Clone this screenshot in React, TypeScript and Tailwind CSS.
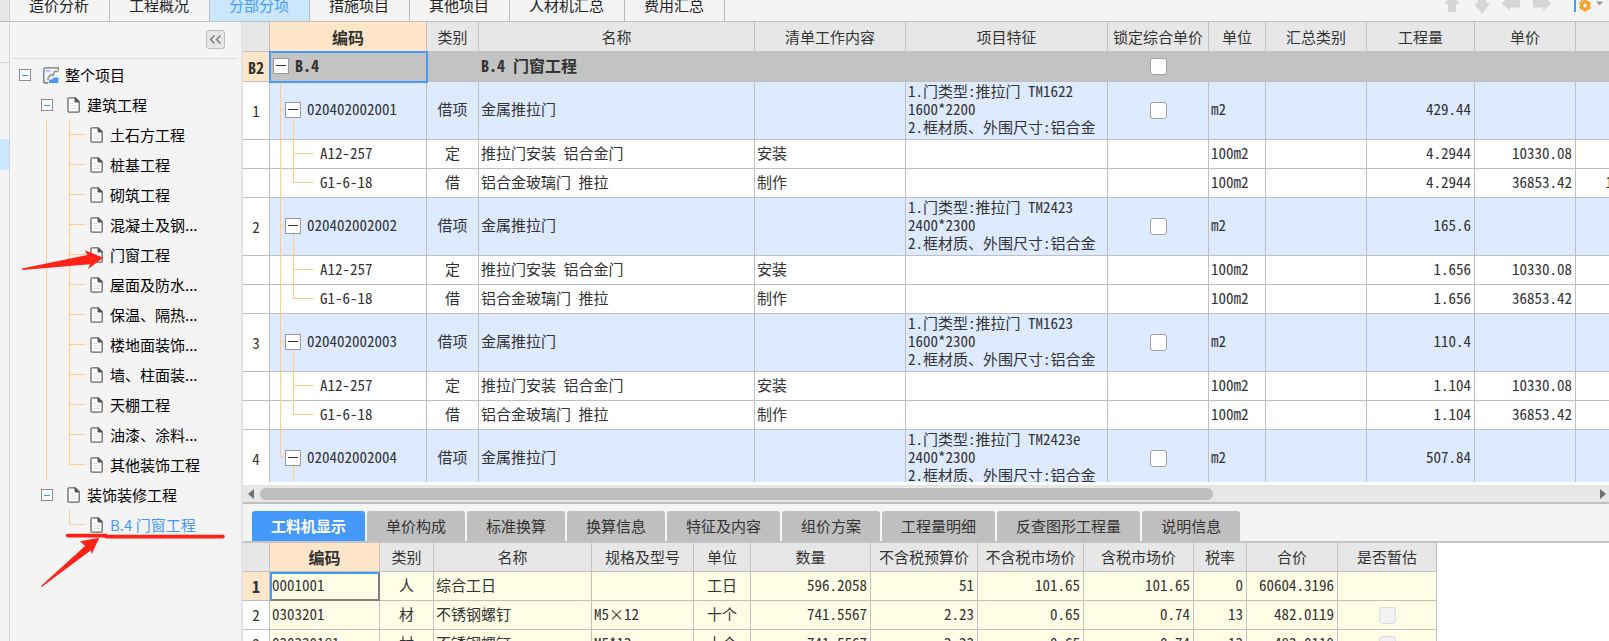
import clsx from 'clsx';

const topTabs = ['造价分析', '工程概况', '分部分项', '措施项目', '其他项目', '人材机汇总', '费用汇总'];

const buildingItems = [
  '土石方工程',
  '桩基工程',
  '砌筑工程',
  '混凝土及钢...',
  '门窗工程',
  '屋面及防水...',
  '保温、隔热...',
  '楼地面装饰...',
  '墙、柱面装...',
  '天棚工程',
  '油漆、涂料...',
  '其他装饰工程',
];

const listColumns = [
  { title: '', width: 'w-[27px]' },
  { title: '编码', width: 'w-[157px]' },
  { title: '类别', width: 'w-[52px]' },
  { title: '名称', width: 'w-[276px]' },
  { title: '清单工作内容', width: 'w-[151px]' },
  { title: '项目特征', width: 'w-[202px]' },
  { title: '锁定综合单价', width: 'w-[101px]' },
  { title: '单位', width: 'w-[57px]' },
  { title: '汇总类别', width: 'w-[101px]' },
  { title: '工程量', width: 'w-[108px]' },
  { title: '单价', width: 'w-[101px]' },
  { title: '', width: 'w-[101px]' },
];

const listItems = [
  { code: '020402002001', model: 'TM1622', size: '1600*2200', total: '429.44', quantity: '4.2944', amount: '158263.33' },
  { code: '020402002002', model: 'TM2423', size: '2400*2300', total: '165.6', quantity: '1.656', amount: '' },
  { code: '020402002003', model: 'TM1623', size: '1600*2300', total: '110.4', quantity: '1.104', amount: '' },
  { code: '020402002004', model: 'TM2423e', size: '2400*2300', total: '507.84', quantity: '', amount: '' },
];

const quotas = [
  { code: 'A12-257', type: '定', name: '推拉门安装 铝合金门', work: '安装', price: '10330.08' },
  { code: 'G1-6-18', type: '借', name: '铝合金玻璃门 推拉', work: '制作', price: '36853.42' },
];

const detailTabs = ['工料机显示', '单价构成', '标准换算', '换算信息', '特征及内容', '组价方案', '工程量明细', '反查图形工程量', '说明信息'];

const detailColumns = [
  { title: '', width: 'w-[27px]' },
  { title: '编码', width: 'w-[110px]' },
  { title: '类别', width: 'w-[54px]' },
  { title: '名称', width: 'w-[158px]' },
  { title: '规格及型号', width: 'w-[102px]' },
  { title: '单位', width: 'w-[57px]' },
  { title: '数量', width: 'w-[120px]' },
  { title: '不含税预算价', width: 'w-[107px]' },
  { title: '不含税市场价', width: 'w-[106px]' },
  { title: '含税市场价', width: 'w-[110px]' },
  { title: '税率', width: 'w-[53px]' },
  { title: '合价', width: 'w-[91px]' },
  { title: '是否暂估', width: 'w-[99px]' },
];

const detailRows = [
  { code: '0001001', type: '人', name: '综合工日', spec: '', unit: '工日', numbers: ['596.2058', '51', '101.65', '101.65', '0', '60604.3196'], estimate: false },
  { code: '0303201', type: '材', name: '不锈钢螺钉', spec: 'M5×12', unit: '十个', numbers: ['741.5567', '2.23', '0.65', '0.74', '13', '482.0119'], estimate: true },
  { code: '0303201@1', type: '材', name: '不锈钢螺钉', spec: 'M5*12', unit: '十个', numbers: ['741.5567', '2.23', '0.65', '0.74', '13', '482.0119'], estimate: true },
];

const cell = 'border-r border-b border-[#c0c0c0] p-0 whitespace-nowrap';
const textCell = 'border-r border-b border-[#c0c0c0] p-0 pb-[3px] whitespace-nowrap';

const FileIcon = () => (
  <svg className="h-4 w-[13px] shrink-0" viewBox="0 0 13 16" fill="none">
    <path d="M1 2Q1 .8 2.2 .8H8.3L12.2 4.8V14Q12.2 15.2 11 15.2H2.2Q1 15.2 1 14Z" fill="#fff" stroke="#666" strokeWidth="1.3" />
    <path d="M8 .8V5H12.2Z" fill="#555" stroke="#555" />
    <path d="M3.5 6.5H7M3.5 9H10M3.5 11.5H10" stroke="#ddd" />
  </svg>
);

const ProjectIcon = () => (
  <svg className="h-[17px] w-4 shrink-0" viewBox="0 0 16 17" fill="none">
    <path d="M5 16H2Q.8 16 .8 15V2Q.8 .8 2 .8H15.4V3.5" stroke="#777" strokeWidth="1.3" />
    <path d="M2.5 4H7.5" stroke="#a9cffb" strokeWidth="2.4" />
    <path d="M15.4 4.5H11.5L10.5 8H7.5L5 11V13" stroke="#888" strokeWidth="1.3" />
    <path d="M6 16V12.5H9L11 10.5H15.4V16Z" fill="#4599fd" />
  </svg>
);

const Expander = () => (
  <button aria-label="折叠" className="flex size-3 shrink-0 items-center justify-center border border-[#8c8c8c] bg-white">
    <span className="h-px w-1.5 bg-[#1ea7e8]" />
  </button>
);

const Branch = ({ last }: { last?: boolean }) => (
  <svg className="h-[30px] w-4 shrink-0" viewBox="0 0 16 30">
    <path d={last ? 'M.5 0V14.5H16' : 'M.5 0V30M.5 14.5H16'} fill="none" stroke="#ffcb85" />
  </svg>
);

const TreeLeaf = ({ label, last, active }: { label: string; last?: boolean; active?: boolean }) => (
  <li className="flex h-[30px] items-center">
    <Branch last={last} />
    <a href="#" className={clsx('ml-[5px] flex items-center gap-[7px]', active && 'text-[#4599fd]')}>
      <FileIcon />
      {label}
    </a>
  </li>
);

const Sidebar = () => (
  <aside className="relative w-[231px] shrink-0 bg-[#f4f4f4] text-[15px] leading-5 text-black">
    <div className="mx-[3px] flex h-[37px] items-end justify-end border-b border-[#dcdcdc] pr-[13px] pb-[9px]">
      <button aria-label="收起" className="flex size-[19px] items-center justify-center rounded-[3px] border border-[#bdbdbd] bg-[#e6e6e6]">
        <svg className="h-[9px] w-[13px]" viewBox="0 0 13 9" fill="none" stroke="#777" strokeWidth="1.4">
          <path d="M5.5 .5L1.5 4.5L5.5 8.5M11.5 .5L7.5 4.5L11.5 8.5" />
        </svg>
      </button>
    </div>
    <div className="pt-px">
      <div className="flex h-[30px] items-center pl-[9px]">
        <Expander />
        <span className="ml-3 flex items-center gap-[6px]">
          <ProjectIcon />
          整个项目
        </span>
      </div>
      <ul>
        <li>
          <div className="flex h-[30px] items-center pl-[31px]">
            <Expander />
            <span className="ml-[14px] flex items-center gap-[7px]">
              <FileIcon />
              建筑工程
            </span>
          </div>
          <ul className="ml-9 border-l border-[#ffcb85] pl-[22px]">
            {buildingItems.map((item, index) => (
              <TreeLeaf key={item} label={item} last={index === buildingItems.length - 1} />
            ))}
          </ul>
        </li>
        <li>
          <div className="flex h-[30px] items-center pl-[31px]">
            <Expander />
            <span className="ml-[14px] flex items-center gap-[7px]">
              <FileIcon />
              装饰装修工程
            </span>
          </div>
          <ul className="pl-[59px]">
            <TreeLeaf label="B.4 门窗工程" last active />
          </ul>
        </li>
      </ul>
    </div>

    {/* Red markers over the tree */}
    <svg className="pointer-events-none absolute top-0 left-0 h-[619px] w-[231px]" viewBox="10 22 231 619" fill="#ff2216">
      <path d="M22 268.5L87.3 255L85 250.3L103.3 257.7L88 269L90 264.3L22.3 270Z" />
      <path d="M41 586L85 546L80 541.3L99.3 537.7L91.7 554.3L91 550.3L41.6 587Z" />
      <path d="M67.5 535.6H106M106 536.6H223" fill="none" stroke="#ff2216" strokeWidth="3.6" strokeLinecap="round" />
    </svg>
  </aside>
);

const RowToggle = () => (
  <button aria-label="折叠" className="flex size-4 shrink-0 items-center justify-center border border-[#999] bg-white">
    <span className="h-px w-2.5 bg-[#333]" />
  </button>
);

const GridHead = ({ columns, height }: { columns: { title: string; width: string }[]; height: string }) => (
  <>
    <colgroup>
      {columns.map((column, index) => (
        <col key={index} className={column.width} />
      ))}
    </colgroup>
    <thead>
      <tr className={clsx('bg-[#e7e7e7]', height)}>
        {columns.map((column, index) => (
          <th key={index} className={clsx(cell, index === 1 ? 'bg-[#ffe6c8] text-base leading-[18px] font-bold' : 'font-normal')}>
            {column.title}
          </th>
        ))}
      </tr>
    </thead>
  </>
);

const Check = ({ label, disabled }: { label: string; disabled?: boolean }) => (
  <input
    type="checkbox"
    aria-label={label}
    disabled={disabled}
    className={clsx(
      'mx-auto block size-[17px] appearance-none rounded-[3px] border',
      disabled ? 'border-[#dcdcdc] bg-[#f2f2f2]' : 'border-[#a0a0a0] bg-white'
    )}
  />
);

const ListTable = () => (
  <div className="min-h-0 flex-1 overflow-hidden bg-white">
    <table className="w-[1434px] table-fixed border-separate border-spacing-0">
      <GridHead columns={listColumns} height="h-[30px]" />
      <tbody>
        <tr className="h-[30px] bg-[#c3c3c3] text-base leading-[18px] font-bold">
          <td className={clsx(cell, 'bg-[#ffe6c8] text-center')}>B2</td>
          <td className={clsx(cell, 'relative outline-2 -outline-offset-1 outline-[#4599fd]')}>
            <div className="flex items-center gap-[6px] pb-[2px] pl-[3px]">
              <RowToggle />
              <span className="pb-[2px]">B.4</span>
            </div>
          </td>
          <td className={cell} />
          <td className={clsx(textCell, 'pl-[2px]')}>B.4 门窗工程</td>
          <td className={cell} />
          <td className={cell} />
          <td className={cell}>
            <Check label="锁定综合单价 B.4" />
          </td>
          <td className={cell} />
          <td className={cell} />
          <td className={cell} />
          <td className={cell} />
          <td className={cell} />
        </tr>
        {listItems.map((item, index) => {
          const last = index === listItems.length - 1;
          return [
            <tr key={item.code} className="h-[58px] bg-[#ddeaff]">
              <td className={clsx(cell, 'bg-white text-center')}>{index + 1}</td>
              <td className={cell}>
                <div className="flex h-[57px] items-center pb-[2px]">
                  <svg className="h-[57px] w-[15px] shrink-0 overflow-visible" viewBox="0 0 15 57" fill="none" stroke="#ffcb85">
                    <path d={last ? 'M10.5 0V28.5H15' : 'M10.5 0V59M10.5 28.5H15'} />
                    <path d="M23.5 36V59" />
                  </svg>
                  <RowToggle />
                  <span className="ml-[6px] pb-[2px]">{item.code}</span>
                </div>
              </td>
              <td className={clsx(textCell, 'text-center')}>借项</td>
              <td className={clsx(textCell, 'pl-[2px]')}>金属推拉门</td>
              <td className={cell} />
              <td className={clsx(textCell, 'pl-[2px]')}>
                1.门类型:推拉门 {item.model}
                <br />
                {item.size}
                <br />
                2.框材质、外围尺寸:铝合金
              </td>
              <td className={cell}>
                <Check label={`锁定综合单价 ${item.code}`} />
              </td>
              <td className={clsx(textCell, 'pl-[2px]')}>m2</td>
              <td className={cell} />
              <td className={clsx(textCell, 'pr-[3px] text-right')}>{item.total}</td>
              <td className={cell} />
              <td className={cell} />
            </tr>,
            ...(last ? [] : quotas).map((quota, quotaIndex) => (
              <tr key={item.code + quota.code} className="h-[29px]">
                <td className={cell} />
                <td className={cell}>
                  <div className="flex h-7 items-center">
                    <svg className="h-7 w-[45px] shrink-0 overflow-visible" viewBox="0 0 45 28" fill="none" stroke="#ffcb85">
                      <path d="M10.5 0V29" />
                      <path d={quotaIndex === 1 ? 'M23.5 0V13.5H44' : 'M23.5 0V29M23.5 13.5H44'} />
                    </svg>
                    <span className="ml-[5px] pb-[3px]">{quota.code}</span>
                  </div>
                </td>
                <td className={clsx(textCell, 'text-center')}>{quota.type}</td>
                <td className={clsx(textCell, 'pl-[2px]')}>{quota.name}</td>
                <td className={clsx(textCell, 'pl-[2px]')}>{quota.work}</td>
                <td className={cell} />
                <td className={cell} />
                <td className={clsx(textCell, 'pl-[2px]')}>100m2</td>
                <td className={cell} />
                <td className={clsx(textCell, 'pr-[3px] text-right')}>{item.quantity}</td>
                <td className={clsx(textCell, 'pr-[3px] text-right')}>{quota.price}</td>
                <td className={clsx(textCell, 'pr-[3px] text-right')}>{quotaIndex === 1 && item.amount}</td>
              </tr>
            )),
          ];
        })}
      </tbody>
    </table>
  </div>
);

const ScrollBar = () => (
  <div className="border-t-[3px] border-b-2 border-t-white border-b-[#c0c0c0] bg-[#e7e7e7]">
    <div className="flex h-[17px] items-center gap-[6px] pl-[5px]">
      <svg className="h-[10px] w-[6px]" viewBox="0 0 6 10">
        <path d="M6 0V10L0 5Z" fill="#6e6e76" />
      </svg>
      <div className="flex-1">
        <div className="h-3 w-5/7 rounded-full bg-[#bfbfbf]" />
      </div>
      <svg className="mr-[3px] h-[10px] w-[6px]" viewBox="0 0 6 10">
        <path d="M0 0V10L6 5Z" fill="#6e6e76" />
      </svg>
    </div>
  </div>
);

const DetailPanel = () => (
  <section className="flex h-[137px] shrink-0 flex-col overflow-hidden bg-white">
    <div className="flex shrink-0 gap-[2px] border-b-2 border-[#c4c4c4] bg-[#f4f4f4] pt-[7px] pl-[9px] font-['Noto_Sans_CJK_SC',sans-serif]">
      {detailTabs.map((tab, index) => (
        <button
          key={tab}
          className={clsx(
            'h-[30px] rounded-t-[3px] px-[19px]',
            index === 0 ? 'bg-[#4599fd] font-bold text-white' : 'bg-[#bfbfbf] text-[#333]'
          )}
        >
          {tab}
        </button>
      ))}
    </div>
    <table className="w-[1194px] table-fixed border-separate border-spacing-0">
      <GridHead columns={detailColumns} height="h-[29px]" />
      <tbody>
        {detailRows.map((row, index) => (
          <tr key={row.code} className="h-[29px] bg-[#ffffe8]">
            <td className={clsx(cell, 'text-center', index === 0 ? 'bg-[#ffe6c8] text-base leading-[18px] font-bold' : 'bg-white')}>
              {index + 1}
            </td>
            <td
              className={clsx(
                'p-0 pb-[3px]',
                index === 0
                  ? 'border-2 border-t-[#4599fd] border-r-[#808080] border-b-[#808080] border-l-[#4599fd]'
                  : 'border-r border-b border-[#c0c0c0] pl-[2px]'
              )}
            >
              {row.code}
            </td>
            <td className={clsx(textCell, 'text-center')}>{row.type}</td>
            <td className={clsx(textCell, 'pl-[2px]')}>{row.name}</td>
            <td className={clsx(textCell, 'pl-[2px]')}>{row.spec}</td>
            <td className={clsx(textCell, 'text-center')}>{row.unit}</td>
            {row.numbers.map((value, i) => (
              <td key={i} className={clsx(textCell, 'pr-[3px] text-right')}>
                {value}
              </td>
            ))}
            <td className={cell}>{row.estimate && <Check label={`是否暂估 ${row.code}`} disabled />}</td>
          </tr>
        ))}
      </tbody>
    </table>
  </section>
);

const arrowPaths = [
  { label: '上移', path: 'M15 -6L22 3V4.5H19V12H11V4.5H8V3Z' },
  { label: '下移', path: 'M11 -5H19V3H22V4.5L15 14L8 4.5V3H11Z' },
  { label: '左移', path: 'M4.5 3.5L13 -4V-.5H23V7.5H13V10.5Z' },
  { label: '右移', path: 'M6 -.5H16V-4L24.5 3.5L16 10.5V7.5H6Z' },
];

const TopBar = () => (
  <header className="flex h-[22px] items-end overflow-hidden border-b border-[#c0c0c0] bg-[#f4f4f4]">
    <div className="h-full w-[10px] border-r border-[#d4d4d4] bg-[#e6e6e6]" />
    {topTabs.map((tab) => (
      <button
        key={tab}
        className={clsx(
          'h-[33px] shrink-0 border-r border-[#b8b8b8] pr-5 pl-[19px] text-[15px] leading-5',
          tab === '分部分项' ? 'bg-[#cbe7ff] text-[#4599fd]' : 'text-[#222]'
        )}
      >
        {tab}
      </button>
    ))}
    <div className="ml-auto flex h-full items-start">
      {arrowPaths.map((arrow) => (
        <button key={arrow.label} aria-label={arrow.label}>
          <svg className="block h-[21px] w-[30px]" viewBox="0 0 30 21">
            <path d={arrow.path} fill="#d6d6d6" />
          </svg>
        </button>
      ))}
      <button aria-label="设置" className="ml-4">
        <svg className="block h-[21px] w-9" viewBox="0 0 36 21">
          <path d="M1 0H3V12H1Z" fill="#4599fd" />
          <path d="M7 -1L9 1" stroke="#999" />
          <path d="M10.5 -.5H13.5L14 1.2L16.5 1.2L18 3.8L16.6 5.5L18 7.2L16.5 9.8H14L13.5 11.5H10.5L10 9.8H7.5L6 7.2L7.4 5.5L6 3.8L7.5 1.2H10Z" fill="#f9a12b" />
          <circle cx="12" cy="5.5" r="2" fill="#f4f4f4" />
          <path d="M23 1.5H30L26.5 5.5Z" fill="#999" />
        </svg>
      </button>
    </div>
  </header>
);

const App = () => {
  return (
    <div className="flex h-screen flex-col overflow-hidden bg-[#f4f4f4] font-['Noto_Sans_CJK_SC',sans-serif]">
      <TopBar />
      <div className="flex min-h-0 flex-1">
        <div className="w-[10px] shrink-0 border-r border-[#d4d4d4]">
          <div className="h-[41px] border-b border-[#d4d4d4]" />
          <div className="mt-[76px] h-[31px] bg-[#cbe7ff]" />
        </div>
        <Sidebar />
        <main className="flex min-w-0 flex-1 flex-col border-l-2 border-[#e2e2e2] font-['Noto_Sans_Mono_CJK_SC','Noto_Sans_CJK_SC',monospace] text-[15px] leading-[18px] text-[#333]">
          <ListTable />
          <ScrollBar />
          <DetailPanel />
        </main>
      </div>
    </div>
  );
};

export default App;
